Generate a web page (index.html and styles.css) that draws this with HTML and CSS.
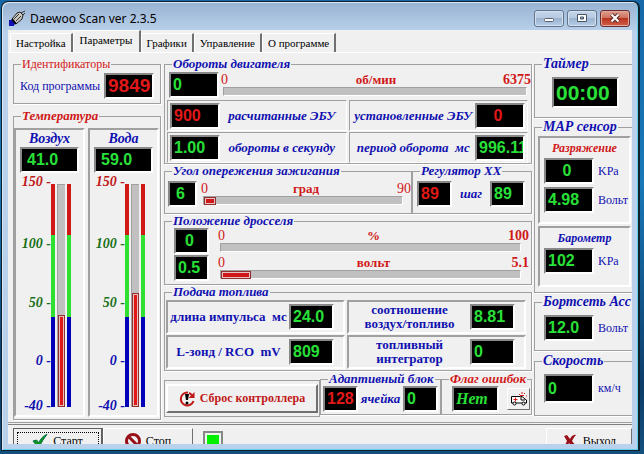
FILE: index.html
```html
<!DOCTYPE html>
<html lang="ru">
<head>
<meta charset="utf-8">
<title>Daewoo Scan ver 2.3.5</title>
<link rel="stylesheet" href="styles.css">
</head>
<body>
<div class="window">
  <header class="titlebar">
    <svg class="app-icon" viewBox="0 0 17 17" aria-hidden="true">
      <path d="M0 10h3l3 3-1 3H0z" fill="#1010b0"/>
      <path d="M3 9l5-6 3-1 3 3-1 4-6 5z" fill="#c8c8c0" stroke="#222"/>
      <path d="M5 9l5-5M7 11l5-5M12 3l4-2M14 5l2-2" stroke="#333"/>
      <path d="M3 9l4 5" stroke="#000" stroke-width="2"/>
    </svg>
    <h1>Daewoo Scan ver 2.3.5</h1>
    <div class="win-buttons">
      <button type="button" aria-label="Свернуть"><svg viewBox="0 0 12 12"><rect x="1.500" y="6.500" width="9" height="3" rx="1" fill="#fff" stroke="#566273"/></svg></button>
      <button type="button" aria-label="Развернуть"><svg viewBox="0 0 12 12"><path d="M1.500 2.500h9v7h-9z" fill="#fff" stroke="#465263"/><path d="M4.500 5h3v2h-3z" fill="#8fb0d2" stroke="#465263"/></svg></button>
      <button type="button" class="close" aria-label="Закрыть"><svg viewBox="0 0 12 12"><path d="M2.500 2.500l7 7M9.500 2.500l-7 7" stroke="#5a2a28" stroke-width="4"/><path d="M2.500 2.500l7 7M9.500 2.500l-7 7" stroke="#fff" stroke-width="2"/></svg></button>
    </div>
  </header>

  <main class="client">
    <div class="tabs" role="tablist">
      <button type="button" role="tab">Настройка</button>
      <button type="button" role="tab" class="active" aria-selected="true">Параметры</button>
      <button type="button" role="tab">Графики</button>
      <button type="button" role="tab">Управление</button>
      <button type="button" role="tab">О программе</button>
    </div>

    <div class="page">
      <div class="col left">
        <fieldset class="ident">
          <legend class="plain red">Идентификаторы</legend>
          <div class="row">
            <span class="unit">Код программы</span>
            <output class="led code">9849</output>
          </div>
        </fieldset>
        <fieldset class="temperature">
          <legend class="red">Температура</legend>
          <div class="thermos">
            <section class="sunken thermo">
              <h2>Воздух</h2>
              <output class="led wide">41.0</output>
              <div class="gauge">
                <ol class="scale"><li class="hot">150 -</li><li class="ok">100 -</li><li class="ok">50 -</li><li>0 -</li><li>-40 -</li></ol>
                <div class="zone"></div>
                <div class="tube"><div class="fill" style="height:41.500%"></div></div>
                <div class="zone"></div>
              </div>
            </section>
            <section class="sunken thermo">
              <h2>Вода</h2>
              <output class="led wide">59.0</output>
              <div class="gauge">
                <ol class="scale"><li class="hot">150 -</li><li class="ok">100 -</li><li class="ok">50 -</li><li>0 -</li><li>-40 -</li></ol>
                <div class="zone"></div>
                <div class="tube"><div class="fill" style="height:51.500%"></div></div>
                <div class="zone"></div>
              </div>
            </section>
          </div>
        </fieldset>
      </div>

      <div class="col middle">
        <fieldset class="rpm">
          <legend>Обороты двигателя</legend>
          <div class="measure">
            <output class="led std">0</output>
            <div class="meter">
              <div class="ticks"><span>0</span><b>об/мин</b><b>6375</b></div>
              <div class="bar"></div>
            </div>
          </div>
          <div class="cells">
            <div class="cell"><output class="led std red">900</output><span>расчитанные ЭБУ</span></div>
            <div class="cell"><span>установленные ЭБУ</span><output class="led std red mid">0</output></div>
            <div class="cell"><output class="led std">1.00</output><span>обороты в секунду</span></div>
            <div class="cell"><span>период оборота&nbsp; мс</span><output class="led std">996.11</output></div>
          </div>
        </fieldset>

        <div class="pair">
          <fieldset class="angle">
            <legend>Угол опережения зажигания</legend>
            <div class="measure">
              <output class="led tiny mid">6</output>
              <div class="meter">
                <div class="ticks"><span>0</span><b>град</b><span>90</span></div>
                <div class="bar"><div class="level" style="width:6%"></div></div>
              </div>
            </div>
          </fieldset>
          <fieldset class="idle">
            <legend>Регулятор ХХ</legend>
            <div class="row">
              <output class="led small red">89</output>
              <span class="caption">шаг</span>
              <output class="led small">89</output>
            </div>
          </fieldset>
        </div>

        <fieldset class="throttle">
          <legend>Положение дросселя</legend>
          <div class="measure">
            <output class="led small mid">0</output>
            <div class="meter">
              <div class="ticks"><span>0</span><b>%</b><b>100</b></div>
              <div class="bar"></div>
            </div>
          </div>
          <div class="measure">
            <output class="led small">0.5</output>
            <div class="meter">
              <div class="ticks"><span>0</span><b>вольт</b><b>5.1</b></div>
              <div class="bar"><div class="level" style="width:10%"></div></div>
            </div>
          </div>
        </fieldset>

        <fieldset class="fuel">
          <legend>Подача топлива</legend>
          <div class="cells">
            <div class="cell sunken"><span>длина импульса&nbsp; мс</span><output class="led medium">24.0</output></div>
            <div class="cell sunken"><span>соотношение<br>воздух/топливо</span><output class="led medium">8.81</output></div>
            <div class="cell sunken"><span>L-зонд / RCO&nbsp; mV</span><output class="led medium">809</output></div>
            <div class="cell sunken"><span>топливный<br>интегратор</span><output class="led medium">0</output></div>
          </div>
        </fieldset>

        <div class="bottom">
          <div class="reset-panel">
            <button type="button" class="reset">
              <svg viewBox="0 0 16 16" aria-hidden="true">
                <path d="M9 1.500a6.500 6.500 0 1 0 5.500 8.500M10 2a6 6 0 0 1 3 2.500" fill="none" stroke="#c01818" stroke-width="2"/>
                <path d="M15.500 1v6h-6z" fill="#c01818"/>
                <path d="M6 3h4l-1 6H7z" fill="#000"/><circle cx="8" cy="12" r="1.500"/>
              </svg>
              Сброс контроллера
            </button>
          </div>
          <fieldset class="adaptive">
            <legend>Адаптивный блок</legend>
            <div class="row">
              <output class="led small red">128</output>
              <span class="caption">ячейка</span>
              <output class="led small">0</output>
            </div>
          </fieldset>
          <fieldset class="errors">
            <legend class="red">Флаг ошибок</legend>
            <div class="row">
              <output class="led word">Нет</output>
              <button type="button" class="ambulance" aria-label="Ошибки">
                <svg viewBox="0 0 18 14" aria-hidden="true">
                  <path d="M1.500 4.500h9l1.500 0 3 2.500 1.500 1v3h-15z" fill="#fff" stroke="#000"/>
                  <path d="M11 5v3h4" fill="none" stroke="#000"/>
                  <circle cx="4.500" cy="11.500" r="1.500" fill="#fff" stroke="#000"/><circle cx="13.500" cy="11.500" r="1.500" fill="#fff" stroke="#000"/>
                  <path d="M5.500 5.500v4M3.500 7.500h4M10 3.500h4M9 2l1 1M12 0v2M15 1l-1 1M16 4h1" stroke="#d81818"/>
                </svg>
              </button>
            </div>
          </fieldset>
        </div>
      </div>

      <div class="col right">
        <fieldset class="timer">
          <legend>Таймер</legend>
          <output class="led clock">00:00</output>
        </fieldset>
        <fieldset class="map">
          <legend>МАР сенсор</legend>
          <section class="sunken vacuum">
            <h2 class="red">Разряжение</h2>
            <div class="reading"><output class="led std mid">0</output><span class="unit">KPa</span></div>
            <div class="reading"><output class="led std">4.98</output><span class="unit">Вольт</span></div>
          </section>
          <section class="sunken baro">
            <h2>Барометр</h2>
            <div class="reading"><output class="led std">102</output><span class="unit">KPa</span></div>
          </section>
        </fieldset>
        <fieldset class="board">
          <legend>Бортсеть Асс</legend>
          <div class="reading"><output class="led std">12.0</output><span class="unit">Вольт</span></div>
        </fieldset>
        <fieldset class="speed">
          <legend>Скорость</legend>
          <div class="reading"><output class="led std tall">0</output><span class="unit">км/ч</span></div>
        </fieldset>
      </div>
    </div>

    <footer class="toolbar">
      <button type="button" class="start">
        <svg viewBox="0 0 17 16" aria-hidden="true"><path d="M1 8l4-1 2 3c2-4 5-8 9-9-3 4-6 8-8 13H6z" fill="#0a9a1a" stroke="#064"/></svg>
        Старт
      </button>
      <button type="button" class="stop">
        <svg viewBox="0 0 16 16" aria-hidden="true"><circle cx="8" cy="8" r="6.500" fill="none" stroke="#981018" stroke-width="3"/><path d="M3 3l10 10" stroke="#981018" stroke-width="3"/></svg>
        Стоп
      </button>
      <span class="lamp"></span>
      <button type="button" class="exit">
        <svg viewBox="0 0 14 16" aria-hidden="true"><path d="M1 3l3-1 3 4c1-2 3-5 6-4-2 2-3 4-4 6l4 5-3 2-4-5-3 5-2-1 3-6z" fill="#981018"/></svg>
        Выход
      </button>
    </footer>
  </main>
</div>
</body>
</html>
```
FILE: styles.css
```css
* { box-sizing: border-box; }

body {
  margin: 0;
  height: 100vh;
  padding: 1px 4px 3px 1px;
  background: linear-gradient(#1668a8, #1878b8 40%, #0c3c68 85%, #14507e);
  font: 12px "Liberation Serif", serif;
  color: #000;
  overflow: hidden;
}

button { font: inherit; color: inherit; margin: 0; padding: 0; }

h1, h2, ol { margin: 0; padding: 0; font-weight: normal; }

.window {
  display: flex;
  flex-direction: column;
  height: 100%;
  padding: 0 6px 6px 6px;
  border: 1px solid #10202c;
  border-right-width: 2px;
  border-radius: 7px 7px 0 0;
  background: linear-gradient(#98b2d2, #b9d1ea 30px, #b9d1ea);
  box-shadow: inset 1px 1px 0 #d8e8f8, inset -1px -1px 0 #60d0f0;
}

.titlebar {
  flex: none;
  display: flex;
  align-items: center;
  height: 28px;
  padding-top: 4px;
}

.app-icon { width: 17px; height: 17px; margin: 0 4px 0 1px; }

.titlebar h1 { flex: 1; font: 12px "Noto Sans", sans-serif; }

.win-buttons { display: flex; gap: 3px; margin-right: 2px; }

.win-buttons button {
  display: flex;
  align-items: center;
  justify-content: center;
  width: 30px;
  height: 17px;
  border: 1px solid #62748c;
  border-radius: 3px;
  background: linear-gradient(#c4d6ea, #b4c8e0 50%, #9cb4d0 50%, #b4cce6);
  box-shadow: inset 0 0 0 1px #d4e2f0;
}

.win-buttons .close {
  border-color: #6a2c30;
  background: linear-gradient(#e0a090, #cc6c58 50%, #b83420 50%, #d06048);
  box-shadow: inset 0 0 0 1px #e0a898;
}

.win-buttons svg { width: 12px; height: 12px; }

.client {
  flex: 1;
  min-height: 0;
  display: flex;
  flex-direction: column;
  background: #f0f0f0;
  overflow: hidden;
}

.tabs { flex: none; display: flex; align-items: flex-end; height: 22px; padding-left: 2px; }

.tabs button {
  height: 19px;
  padding: 0 5px;
  border: 1px solid #fff;
  border-right: 2px solid #707070;
  border-bottom: 0;
  background: #f0f0f0;
  font-size: 11px;
}

.tabs .active { height: 22px; padding: 0 6px 3px; }

.page {
  flex: none;
  display: grid;
  grid-template-columns: 148px minmax(0, 1fr) 98px;
  gap: 2px;
  padding: 4px 0 2px 5px;
  border-top: 1px solid #fff;
  border-bottom: 1px solid #a0a0a0;
}

.col { display: flex; flex-direction: column; min-width: 0; }
.middle { padding-left: 1px; }

fieldset {
  min-width: 0;
  margin: 0;
  padding: 0;
  border: 1px solid #a0a0a0;
  box-shadow: 1px 1px 0 #fff;
}

legend {
  margin-left: 7px;
  padding: 0 1px;
  font: italic bold 13px/14px "Liberation Serif", serif;
  color: #1010b0;
}

legend.plain { font-style: normal; font-weight: normal; font-size: 12px; }
legend.red, h2.red { color: #d01818; }

h2 {
  font: italic bold 14px/17px "Liberation Serif", serif;
  color: #1010b0;
  text-align: center;
}

.unit { font-size: 12px; color: #1010b0; white-space: nowrap; }

.caption { font: italic bold 13px "Liberation Serif", serif; color: #1010b0; }

.row { display: flex; align-items: center; justify-content: space-between; }

.sunken {
  border: 2px solid #fff;
  border-top-color: #a0a0a0;
  border-left-color: #a0a0a0;
}

.led {
  flex: none;
  display: block;
  height: 26px;
  padding-left: 2px;
  border: 2px solid #fff;
  border-top-color: #888;
  border-left-color: #888;
  background: #000;
  color: #28e038;
  font: bold 16px/22px "Liberation Sans", sans-serif;
  overflow: hidden;
}

.led.red { color: #e01818; }
.led.std { width: 50px; }
.led.small { width: 35px; }
.led.tiny { width: 29px; }
.led.medium { width: 45px; }
.led.wide { width: 59px; padding-left: 5px; }
.led.tall { height: 29px; line-height: 25px; }
.led.mid { padding: 0 4px 0 0; text-align: center; }
.led.code { width: 50px; color: #e01818; font-size: 19px; }
.led.word { width: 47px; font: italic bold 16px/22px "Liberation Serif", serif; }
.led.clock { width: 67px; height: 31px; font-size: 21px; line-height: 27px; }

.ident { height: 47px; margin-bottom: 5px; }
.ident .row { padding: 2px 6px 0 6px; }

.thermos { display: flex; justify-content: space-between; padding: 5px 1px 2px 0; }
.thermo { width: 71px; height: 289px; }
.thermo .led { margin-left: 4px; }

.gauge { display: flex; }

.scale {
  display: grid;
  grid-template-rows: 62px 59px 58px 45px 16px;
  width: 35px;
  padding-top: 1px;
  list-style: none;
  text-align: right;
  font: italic bold 14px/16px "Liberation Serif", serif;
  color: #1010b0;
  white-space: nowrap;
}

.scale .hot { color: #c01818; }
.scale .ok { color: #187018; }

.zone {
  width: 4px;
  height: 223px;
  margin-top: 11px;
  background: linear-gradient(#d01818 51px, #30e030 51px, #30e030 133px, #0000b8 133px);
}

.tube {
  display: flex;
  align-items: flex-end;
  width: 8px;
  height: 223px;
  margin: 11px 2px 0;
  background: #c0c0c0;
  border: solid #a0a0a0;
  border-width: 1px 0 0 1px;
}

.fill { width: 7px; background: #e01818; border: 1px solid #903030; box-shadow: inset 0 0 0 1px #e8c0c0; }

.measure { display: flex; }
.meter { flex: 1; }

.ticks {
  display: grid;
  grid-template-columns: 1fr auto 1fr;
  font: 14px/15px "Liberation Serif", serif;
  color: #d01818;
}

.ticks b:nth-child(2) { font-size: 13px; }
.ticks > :last-child { text-align: right; }

.bar {
  height: 9px;
  margin: 0 8px 0 2px;
  border: 1px solid #fff;
  border-top-color: #a0a0a0;
  border-left-color: #a0a0a0;
  background: #c0c0c0;
}

.rpm .bar { margin-right: 4px; }

.level { height: 8px; background: #d01818; border: 1px solid #903030; box-shadow: inset 0 0 0 1px #e8c0c0; }

.cells { display: grid; grid-template-columns: 1fr 1fr; }

.cell {
  display: flex;
  align-items: center;
  font: bold 13px/14px "Liberation Serif", serif;
  color: #1010b0;
}

.cell span { flex: 1; text-align: center; white-space: nowrap; }

.rpm { height: 107px; }
.rpm .measure { padding: 1px 0 2px 4px; }
.rpm .meter { padding-left: 2px; }
.rpm .cells { gap: 1px 2px; margin: 0 3px 0 2px; }
.rpm .cell {
  height: 31px;
  padding: 0 2px;
  border: 1px solid #a0a0a0;
  border-right-color: #fff;
  border-bottom-color: #fff;
  font-style: italic;
}

.pair { display: grid; grid-template-columns: 248fr 120fr; }
.angle, .idle { height: 50px; }
.angle .measure { padding: 3px 0 0 3px; }
.angle .meter { padding-left: 4px; }
.idle .row { padding: 3px 6px 0 4px; }

.throttle { height: 71px; }
.throttle .measure { padding: 0 2px 1px 9px; }
.throttle .meter { padding-left: 9px; }

.fuel { height: 86px; margin-bottom: 1px; }
.fuel .cells { gap: 1px 2px; margin: 1px 5px 0 1px; }
.fuel .cell { height: 34px; padding-right: 9px; }

.bottom { display: grid; grid-template-columns: 156fr 121fr 91fr; }

.reset-panel {
  height: 37px;
  margin-top: 8px;
  padding: 3px 1px;
  border: 1px solid #a0a0a0;
}

.reset {
  display: flex;
  align-items: center;
  justify-content: center;
  gap: 5px;
  width: 100%;
  height: 29px;
  border: 2px solid #707070;
  border-top-color: #fff;
  border-left-color: #fff;
  background: #f0f0f0;
  color: #c01818;
  font: bold 12px "Liberation Serif", serif;
}

.reset svg { width: 16px; height: 16px; }

.adaptive, .errors { height: 43px; }
.adaptive .row { padding: 0 2px; }
.errors .row { padding: 0 1px 0 10px; }

.ambulance {
  display: flex;
  align-items: center;
  justify-content: center;
  width: 23px;
  height: 22px;
  border: 1px solid #707070;
  border-top-color: #fff;
  border-left-color: #fff;
  background: #f0f0f0;
}

.ambulance svg { flex: none; width: 18px; height: 14px; }

.right fieldset { border-right: 0; }
.right legend { font-size: 14px; }
.right h2 { font-size: 12px; }
.timer { height: 61px; margin-bottom: 2px; }
.timer .led { margin: 6px 0 0 17px; }
.map { height: 173px; margin-bottom: 2px; }
.map .sunken { margin: 2px 1px 0 3px; }
.vacuum { height: 88px; }
.baro { height: 61px; }
.vacuum h2 { line-height: 20px; }
.baro h2 { line-height: 20px; }
.vacuum .reading { margin-bottom: 3px; }
.reading { display: flex; align-items: center; gap: 4px; padding-left: 4px; }
.board { height: 56px; margin-bottom: 3px; }
.board .reading { padding: 6px 0 0 9px; }
.speed { height: 62px; }
.speed .reading { padding: 6px 0 0 9px; }

.toolbar {
  flex: none;
  display: flex;
  height: 30px;
  margin-top: 1px;
  padding: 3px 0 0 5px;
  border-top: 1px solid #808080;
}

.toolbar button {
  display: flex;
  align-items: center;
  justify-content: center;
  gap: 5px;
  height: 26px;
  border: 1px solid #fff;
  border-right: 1px solid #707070;
  background: #f0f0f0;
}

.toolbar svg { width: 16px; height: 16px; }
.toolbar .start { width: 90px; border: 1px solid #606060; border-right-width: 2px; outline: 1px dotted #000; outline-offset: -5px; }
.toolbar .stop { width: 90px; }
.toolbar .exit { width: 86px; margin-left: auto; }

.lamp {
  width: 20px;
  height: 18px;
  margin: 3px 0 0 10px;
  border: 2px solid #888;
  background: #00f000;
  box-shadow: inset 0 0 0 2px #e8f8e8;
}
```
